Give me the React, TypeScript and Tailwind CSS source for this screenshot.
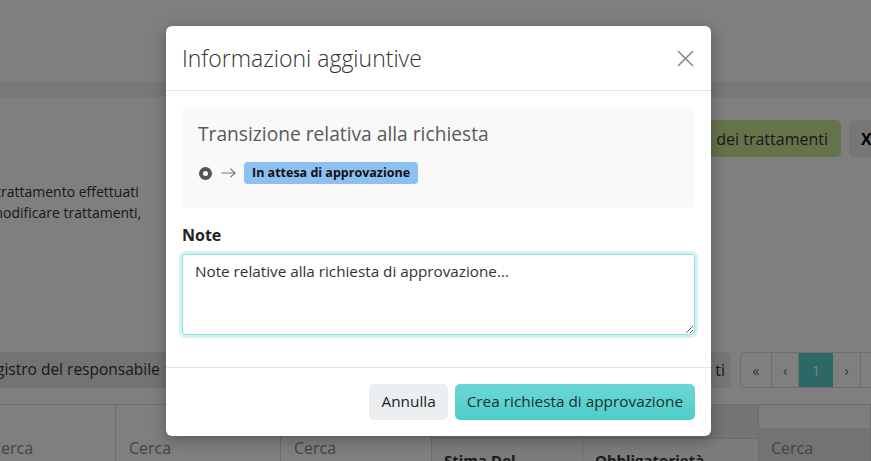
import { useState } from "react";

// --- page behind the dialog (dimmed by the backdrop) ---

const columns = [
  { w: "w-[116px]", kind: "search" },
  { w: "w-[165px]", kind: "search" },
  { w: "w-[151px]", kind: "search" },
  { w: "w-[151px]", kind: "head", label: "Stima Del" },
  { w: "w-[176px]", kind: "head", label: "Obbligatorietà" },
  { w: "w-[112px]", kind: "band" },
];

function BackgroundPage() {
  return (
    <div className="text-[#333]">
      <div className="h-[82px]" />
      <div className="h-[15px] bg-[#f0f0f0]" />

      <div className="flex justify-end gap-2 pt-[23px] -mr-[22px]">
        <button className="h-[37px] rounded-[5px] bg-[#cae696] px-[13px] text-[16px]">
          Visualizza registri dei trattamenti
        </button>
        <button className="h-[37px] w-[44px] rounded-[5px] bg-[#ececec] pl-3 text-left text-[16px] font-bold text-black">
          X
        </button>
      </div>

      <div className="mt-[24px] text-[14px] leading-[21px]">
        <div className="-ml-[4px]">trattamento effettuati</div>
        <div className="-ml-[10px]">modificare trattamenti,</div>
      </div>

      <div className="mt-[129px] flex h-[36px] items-stretch -mr-[20px]">
        <div className="-ml-[18px] flex w-[193px] items-center rounded-[5px] bg-[#e6e6e6] pl-[14px] text-[15.5px]">
          gistro del responsabile
        </div>
        <div className="ml-auto flex w-[40px] items-center justify-end rounded-[5px] bg-[#ececec] pr-[6px] text-[16px]">
          ti
        </div>
        <div className="ml-[9px] flex shrink-0 overflow-hidden rounded-l-[5px] border border-r-0 border-[#dcdcdc] text-[14px] text-[#666]">
          <span className="flex w-[31px] items-center justify-center border-r border-[#dcdcdc]">«</span>
          <span className="flex w-[27px] items-center justify-center border-r border-[#dcdcdc]">‹</span>
          <span className="flex w-[34px] items-center justify-center bg-[#5bd0cf] text-white">1</span>
          <span className="flex w-[28px] items-center justify-center border-r border-[#dcdcdc]">›</span>
          <span className="flex w-[30px] items-center justify-center">»</span>
        </div>
      </div>

      <div className="mt-[16px] flex border-t border-[#dcdcdc]">
        {columns.map((c, i) => (
          <div key={i} className={`${c.w} shrink-0 border-r border-[#dcdcdc] h-[80px]`}>
            {c.kind === "search" && (
              <div className="pl-[13px] pt-[31px] text-[16px] text-[#888]">
                {i === 0 ? <span className="-ml-[22px]">Cerca</span> : "Cerca"}
              </div>
            )}
            {c.kind === "head" && (
              <div className="h-full bg-[#e8e8e8]">
                <div className="h-[34px] border-b border-[#dcdcdc]" />
                <div className="bg-[#f8f8f8] h-full pl-[12px] pt-[10px] text-[15px] font-bold">
                  {c.label}
                </div>
              </div>
            )}
            {c.kind === "band" && (
              <div className="h-full bg-[#e6e6e6]">
                <div className="h-[23px] bg-[#fbfbfb]" />
                <div className="pl-[12px] pt-[8px] text-[16px] text-[#888]">Cerca</div>
              </div>
            )}
          </div>
        ))}
      </div>
    </div>
  );
}

// --- dialog ---

function CloseIcon() {
  return (
    <svg width="17" height="17" viewBox="0 0 17 17" fill="none" stroke="#8a8a8a" strokeWidth="1.6" strokeLinecap="round">
      <line x1="1.5" y1="1.5" x2="15.5" y2="15.5" />
      <line x1="15.5" y1="1.5" x2="1.5" y2="15.5" />
    </svg>
  );
}

function ArrowIcon() {
  return (
    <svg width="15" height="10" viewBox="0 0 15 10" fill="none" stroke="#777" strokeWidth="1.1" strokeLinecap="round" strokeLinejoin="round">
      <line x1="0.8" y1="5" x2="14" y2="5" />
      <polyline points="9.5,0.8 14,5 9.5,9.2" />
    </svg>
  );
}

function ApprovalDialog() {
  const [note, setNote] = useState("");

  return (
    <div className="ml-[6px] w-[545px] overflow-hidden rounded-[6px] bg-white shadow-[0_4px_16px_rgba(0,0,0,0.3)]">
      <div className="flex h-[65px] items-center justify-between border-b border-[#e5e5e5] pl-[16px] pr-[16px]">
        <h3 className="text-[23px] font-light text-[#333]">Informazioni aggiuntive</h3>
        <button className="flex h-[20px] w-[20px] items-center justify-center">
          <CloseIcon />
        </button>
      </div>

      <div className="px-4 pt-4 pb-8">
        <div className="rounded-[6px] bg-[#f9f9f9] px-4 pt-[13px] pb-[24px]">
          <h4 className="text-[19.2px] leading-[28px] text-[#5a5a5a]">
            Transizione relativa alla richiesta
          </h4>
          <div className="mt-[14px] flex items-center">
            <span className="ml-[1px] flex h-[13px] w-[13px] items-center justify-center rounded-full bg-[#555]">
              <span className="h-[5px] w-[5px] rounded-full bg-white" />
            </span>
            <span className="ml-[9px] flex">
              <ArrowIcon />
            </span>
            <span className="ml-[8px] flex h-[22px] items-center rounded-[4px] bg-[#8ebff2] px-[8px] text-[12.5px] font-bold text-[#111]">
              In attesa di approvazione
            </span>
          </div>
        </div>

        <label className="mt-[15px] mb-[7px] block text-[16px] leading-[24px] font-bold text-[#222]">
          Note
        </label>
        <textarea
          value={note}
          onChange={(e) => setNote(e.target.value)}
          placeholder="Note relative alla richiesta di approvazione..."
          className="block h-[81px] w-full rounded-[4px] border border-[#9adada] px-[12px] py-[6px] text-[15.25px] leading-[21px] text-[#333] outline-none ring-[3px] ring-[#d3f2f2] placeholder:text-[#333]"
        />
      </div>

      <div className="flex justify-end gap-[7px] border-t border-[#e5e5e5] p-4">
        <button className="h-[36px] rounded-[5px] bg-[#eceff1] px-[12px] text-[15.35px] text-[#222]">
          Annulla
        </button>
        <button className="h-[36px] rounded-[5px] bg-gradient-to-b from-[#6bd7d5] to-[#4ecdca] px-[12px] text-[15.35px] text-[#1d2f2f]">
          Crea richiesta di approvazione
        </button>
      </div>
    </div>
  );
}

export default function App() {
  return (
    <div className="relative h-[461px] w-full overflow-hidden bg-white font-['Open_Sans',sans-serif]">
      <BackgroundPage />
      <div className="absolute inset-0 bg-black/50" />
      <div className="absolute inset-0 flex items-start justify-center pt-[26px]">
        <ApprovalDialog />
      </div>
    </div>
  );
}
